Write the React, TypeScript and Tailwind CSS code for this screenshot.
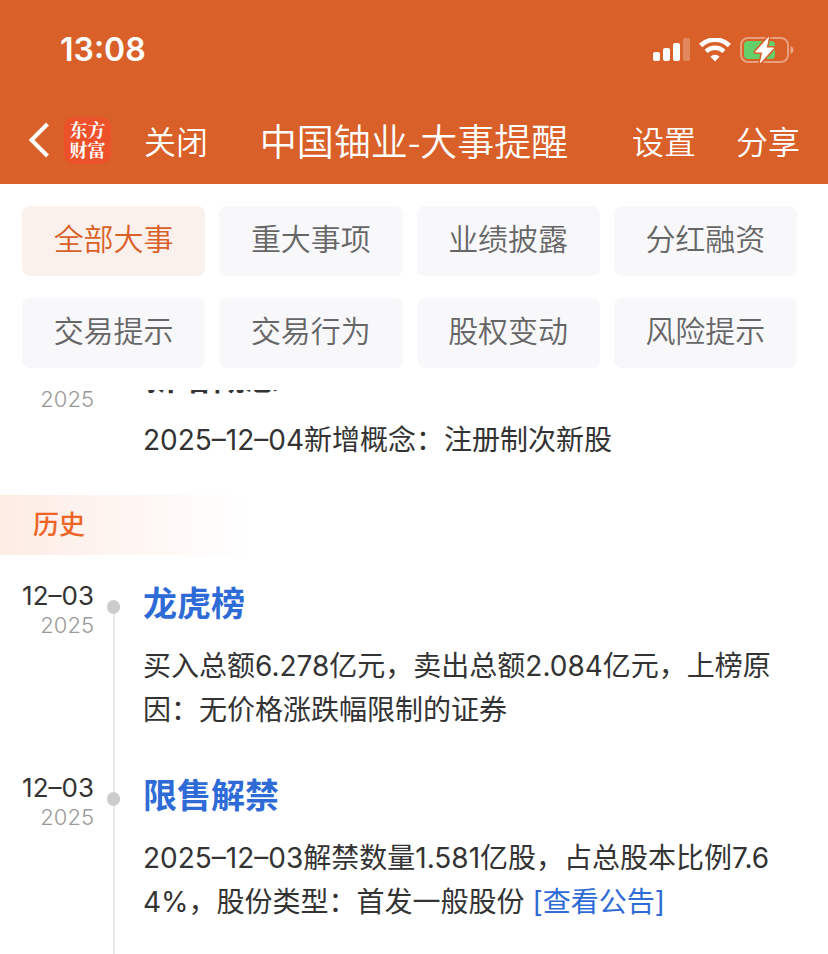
import { useState } from "react";

const categories = [
	"全部大事",
	"重大事项",
	"业绩披露",
	"分红融资",
	"交易提示",
	"交易行为",
	"股权变动",
	"风险提示",
];

interface TimelineEvent {
	id: string;
	date: string;
	year: string;
	title: string;
	description: string;
	link?: string;
}

const upcoming: TimelineEvent[] = [
	{
		id: "concept",
		date: "12–04",
		year: "2025",
		title: "新增概念",
		description: "2025–12–04新增概念：注册制次新股",
	},
];

const history: TimelineEvent[] = [
	{
		id: "billboard",
		date: "12–03",
		year: "2025",
		title: "龙虎榜",
		description:
			"买入总额6.278亿元，卖出总额2.084亿元，上榜原因：无价格涨跌幅限制的证券",
	},
	{
		id: "unlock",
		date: "12–03",
		year: "2025",
		title: "限售解禁",
		description:
			"2025–12–03解禁数量1.581亿股，占总股本比例7.64%，股份类型：首发一般股份",
		link: "[查看公告]",
	},
];

function StatusBar() {
	return (
		<div className="flex justify-between items-center pr-[34px] pl-[60px] h-[100px]">
			<span className="font-semibold text-[32px] leading-10">13:08</span>
			<div className="flex items-center gap-[9px]">
				<svg width="38" height="24" viewBox="0 0 38 24" fill="currentColor" aria-hidden="true">
					<rect x="1" y="14" width="7" height="9" rx="2" />
					<rect x="11" y="10" width="7" height="13" rx="2" />
					<rect x="21" y="5" width="7" height="18" rx="2" />
					<rect x="31" y="0" width="7" height="23" rx="2" opacity="0.25" />
				</svg>
				<svg width="32" height="24" viewBox="0 0 32 24" fill="none" stroke="currentColor" aria-hidden="true">
					<path d="M1.6 7.500a20.600 20.600 0 0 1 28.800 0" strokeWidth="4.6" />
					<path d="M7.1 13.400a12.600 12.600 0 0 1 17.800 0" strokeWidth="4.4" />
					<path d="M16 23.400l-4.600-4.700a6.600 6.600 0 0 1 9.200 0z" fill="currentColor" stroke="none" />
				</svg>
				<svg width="54" height="28" viewBox="0 0 54 28" aria-hidden="true">
					<rect x="1" y="2" width="47" height="24" rx="7" fill="none" stroke="#fff" strokeOpacity="0.4" strokeWidth="2" />
					<path d="M50.500 10v8c1.800-.7 3-2.200 3-4s-1.200-3.300-3-4z" fill="#fff" fillOpacity="0.45" />
					<rect x="4" y="5" width="31" height="18" rx="4" fill="#65cf6a" />
					<path
						d="M28.500 1.500L15.500 16h7.200L20.500 26.500 33.500 12h-7.400z"
						fill="#d96028"
						stroke="#d96028"
						strokeWidth="4"
						strokeLinejoin="round"
					/>
					<path
						d="M28.500 1.500L15.500 16h7.200L20.500 26.500 33.500 12h-7.400z"
						fill="#fff"
						stroke="#fff"
						strokeWidth="1"
						strokeLinejoin="round"
					/>
				</svg>
			</div>
		</div>
	);
}

function NavBar() {
	return (
		<div className="items-center grid grid-cols-[1fr_auto_1fr] px-[28px] pb-1 h-[84px] font-[350] font-['Noto_Sans_CJK_SC',sans-serif]">
			<div className="flex items-center">
				<button type="button" aria-label="返回">
					<svg width="22" height="36" viewBox="0 0 22 36" fill="none" stroke="currentColor" strokeWidth="4" aria-hidden="true">
						<path d="M19.500 2L3.500 18l16 16" />
					</svg>
				</button>
				<span className="flex justify-center items-center bg-[#ec5129] ml-[14px] pb-[3px] rounded-[10px] w-[47px] h-[47px] font-bold font-['Noto_Serif_CJK_SC','Noto_Sans_CJK_SC',sans-serif] text-[18px] text-center leading-5">
					东方
					<br />
					财富
				</span>
				<button type="button" className="ml-[33px] text-[32px] leading-9">
					关闭
				</button>
			</div>
			<h1 className="text-[37px] leading-9">中国铀业-大事提醒</h1>
			<div className="flex justify-end gap-10 text-[32px] leading-9">
				<button type="button">设置</button>
				<button type="button">分享</button>
			</div>
		</div>
	);
}

interface EventItemProps {
	event: TimelineEvent;
	isUpcoming?: boolean;
	isFirst?: boolean;
}

function EventItem({ event, isUpcoming, isFirst }: EventItemProps) {
	return (
		<li className="flex last:grow">
			<div className="pr-3 w-[106px] text-right shrink-0">
				<p className="text-[#333] text-[26px] leading-7">{event.date}</p>
				<p className="font-light text-[#999] text-[22px] leading-[30px]">{event.year}</p>
			</div>
			<div className="flex flex-col items-center w-[15px] shrink-0">
				{!isUpcoming && (
					<>
						<span className={`w-[2px] h-[18px] shrink-0 ${isFirst ? "bg-transparent" : "bg-[#e8e8e8]"}`} />
						<span className="bg-[#ccc] rounded-full w-[13px] h-[14px] shrink-0" />
						<span className="bg-[#e8e8e8] w-[2px] grow" />
					</>
				)}
			</div>
			<div className="pb-[42px] pl-[22px] grow">
				<h3
					className={`font-bold text-[34px] leading-[44px] ${isUpcoming ? "text-[#333]" : "text-[#2e6bd6]"}`}
				>
					{event.title}
				</h3>
				<p className="mt-[18px] font-[380] text-[#333] text-[28px] break-all leading-[44px]">
					{event.description}
					{event.link && (
						<>
							{" "}
							<a href="#notice" className="text-[#2e6bd6]">
								{event.link}
							</a>
						</>
					)}
				</p>
			</div>
		</li>
	);
}

export default function App() {
	const [active, setActive] = useState(categories[0]);

	return (
		<div
			lang="zh-CN"
			className="flex flex-col bg-white h-screen font-['Inter','Noto_Sans_CJK_SC',sans-serif]"
		>
			<header className="bg-[#d96028] text-white shrink-0">
				<StatusBar />
				<NavBar />
			</header>

			<nav className="gap-x-[14px] gap-y-[22px] grid grid-cols-4 pt-[22px] pr-[31px] pb-[22px] pl-[22px] shrink-0">
				{categories.map((category) => (
					<button
						key={category}
						type="button"
						onClick={() => setActive(category)}
						className={`pb-[3px] rounded-lg h-[70px] font-[350] text-[30px] ${category === active ? "bg-[#fbf1ec] text-[#d96028]" : "bg-[#f8f8fb] text-[#666]"}`}
					>
						{category}
					</button>
				))}
			</nav>

			<main className="flex flex-col min-h-0 overflow-y-auto grow [scrollbar-width:none]">
				<ul className="-mt-[34px] pr-[42px] shrink-0">
					{upcoming.map((event) => (
						<EventItem key={event.id} event={event} isUpcoming />
					))}
				</ul>
				<h2 className="bg-linear-to-r from-[#fdece4] to-white -mt-[9px] pl-[33px] w-[250px] font-medium text-[#ee6426] text-[26px] leading-[60px] shrink-0">
					历史
				</h2>
				<ul className="flex flex-col pt-[27px] pr-[42px] shrink-0 grow">
					{history.map((event, index) => (
						<EventItem key={event.id} event={event} isFirst={index === 0} />
					))}
				</ul>
			</main>
		</div>
	);
}
